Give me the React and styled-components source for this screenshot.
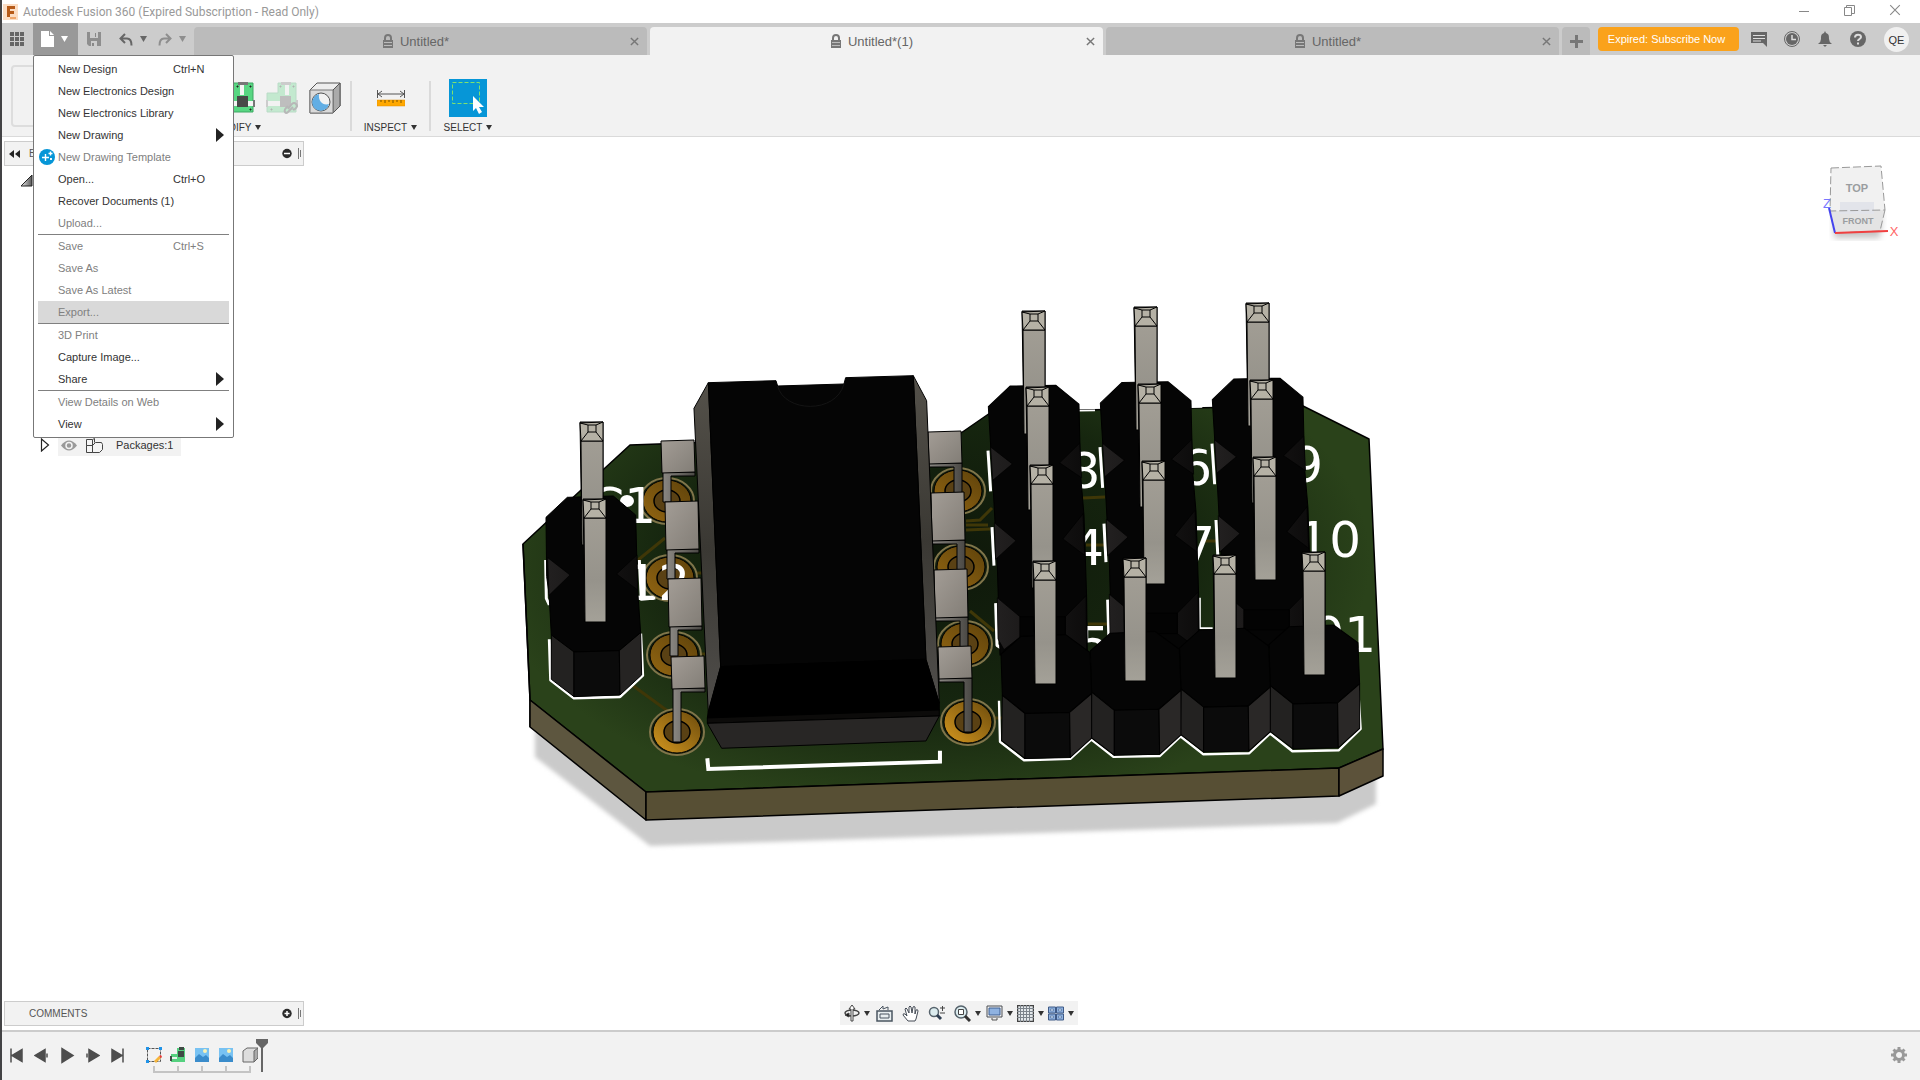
import styled, { createGlobalStyle, css } from "styled-components";

const cores = {
    barra: '#CCCCCC',
    painel: '#F2F2F2',
    aba: '#BBBBBB',
    texto: '#333333',
    apagado: '#808080',
    azul: '#0696D7',
    laranja: '#FAA21B'
};

const GlobalStyle = createGlobalStyle`
    * {
        box-sizing: border-box;
    }

    body {
        margin: 0;
        background-color: #FFFFFF;
        font-family: "Liberation Sans", Arial, sans-serif;
        font-size: 11px;
        color: ${cores.texto};
    }

    button {
        font: inherit;
        color: inherit;
        background: none;
        border: none;
        padding: 0;
        cursor: pointer;
    }

    svg {
        display: block;
        flex: none;
    }
`

const Window = styled.div`
    display: flex;
    flex-direction: column;
    min-height: 100vh;
    border-left: 2px solid #434345;
    overflow: hidden;
`

const TitleBar = styled.header`
    display: flex;
    align-items: center;
    height: 23px;
    padding: 0 14px 0 1px;
    gap: 5px;
    font-family: Roboto, "Noto Sans", sans-serif;
    font-size: 12px;
    line-height: 16px;
    color: #999999;
`

const Title = styled.span`
    flex: 1;
    white-space: nowrap;
`

const WindowButtons = styled.div`
    display: flex;
    gap: 34px;
    padding: 0 5px 3px 0;
`

const AppBar = styled.div`
    display: flex;
    align-items: flex-end;
    height: 32px;
    background-color: ${cores.barra};
`

const Tools = styled.div`
    display: flex;
    height: 100%;
    width: 192px;
    flex: none;
`

const ToolButton = styled.button`
    display: flex;
    align-items: center;
    justify-content: center;
    gap: 7px;
    height: 32px;
    width: ${({ $width }) => $width}px;
    padding-right: 2px;
    color: ${({ $dim }) => ($dim ? '#8E8E8E' : '#666666')};
`

const FileMenu = styled.div`
    position: relative;
    background-color: #999999;

    > button {
        color: #FFFFFF;
    }
`

const Menu = styled.div`
    position: absolute;
    z-index: 5;
    top: 32px;
    left: 0;
    width: 201px;
    padding: 2px 4px;
    background-color: #FFFFFF;
    border: 1px solid #777777;
    border-radius: 2px;
`

const MenuItem = styled.button`
    display: grid;
    grid-template-columns: 20px 115px 1fr 13px;
    align-items: center;
    width: 100%;
    height: 22px;
    text-align: left;
    white-space: nowrap;
    color: ${({ disabled }) => (disabled ? cores.apagado : cores.texto)};
    ${({ $active }) => $active && css`
        background-color: #D9D9D9;
    `}
`

const MenuLine = styled.hr`
    height: 1px;
    margin: 0;
    border: none;
    background-color: #808080;
`

const Tabs = styled.div`
    display: flex;
    flex: 1;
    gap: 3px;
    min-width: 0;
`

const Tab = styled.div`
    display: flex;
    align-items: center;
    flex: 1;
    height: 28px;
    padding: 0 8px;
    border-radius: 4px 4px 0 0;
    background-color: ${({ $active }) => ($active ? cores.painel : cores.aba)};
    color: #777777;
`

const TabName = styled.button`
    display: flex;
    align-items: center;
    justify-content: center;
    gap: 7px;
    flex: 1;
    font-size: 13px;
    color: #666666;
`

const NewTab = styled.button`
    display: flex;
    align-items: center;
    justify-content: center;
    width: 28px;
    height: 28px;
    margin-left: 3px;
    border-radius: 4px 4px 0 0;
    background-color: ${cores.aba};
    color: #777777;
`

const Subscribe = styled.button`
    width: 141px;
    height: 24px;
    margin: 0 4px 4px 8px;
    padding-right: 4px;
    border-radius: 4px;
    background-color: ${cores.laranja};
    color: #FFFFFF;
`

const Avatar = styled.button`
    width: 25px;
    height: 25px;
    margin: 0 11px 3px 9px;
    border-radius: 50%;
    background-color: #F0F0F0;
    font-size: 11px;
`

const Ribbon = styled.div`
    display: flex;
    height: 82px;
    padding: 10px 0 0 9px;
    background-color: ${cores.painel};
    border-bottom: 1px solid #DADADA;
`

const Workspace = styled.button`
    width: 100px;
    height: 62px;
    border: 2px solid #DDDDDD;
    border-radius: 4px;
`

const Group = styled.div`
    display: flex;
    flex-direction: column;
    width: ${({ $width }) => $width}px;
    padding-top: 11px;
    margin-left: ${({ $space }) => $space || 0}px;
`

const GroupIcons = styled.div`
    display: flex;
    align-items: center;
    justify-content: ${({ $end }) => ($end ? 'flex-end' : 'center')};
    gap: 11px;
    height: 44px;
`

const GroupLabel = styled.button`
    display: flex;
    align-items: center;
    justify-content: center;
    gap: 4px;
    height: 14px;
    font-size: 10px;
`

const GroupLine = styled.div`
    width: 2px;
    height: 50px;
    margin-top: 16px;
    background-color: #DADADA;
`

const Viewport = styled.main`
    position: relative;
    display: flex;
    flex-direction: column;
    justify-content: space-between;
    flex: 1;
`

/* the model sits under the panels */
const Scene = styled.svg`
    position: absolute;
    inset: 0;
    width: 100%;
    height: 100%;
`

const TopRow = styled.div`
    position: relative;
    display: flex;
    justify-content: space-between;
    padding: 4px 16px 0 2px;
`

const CubeCorner = styled.div`
    padding-top: 19px;
`

const BottomRow = styled.div`
    position: relative;
    display: grid;
    grid-template-columns: 1fr auto 1fr;
    padding: 0 6px 4px 2px;
`

const PanelBar = styled.div`
    display: flex;
    align-items: center;
    width: 300px;
    height: 25px;
    padding: 0 1px 0 4px;
    background-color: ${cores.painel};
    border: 1px solid ${cores.barra};
    font-size: 10px;
    color: #555555;

    > span {
        flex: 1;
        padding-left: ${({ $indent }) => $indent}px;
    }
`

const Tree = styled.ul`
    list-style: none;
    margin: 0;
    padding: 3px 0 0 16px;
`

const TreeRow = styled.li`
    display: flex;
    align-items: center;
    height: 22px;
    gap: 8px;
    margin-top: ${({ $space }) => $space || 0}px;
    padding-left: ${({ $level }) => $level * 18}px;
`

const TreeLabel = styled.button`
    display: flex;
    align-items: center;
    height: 22px;
    width: 123px;
    gap: 9px;
    padding-left: 3px;
    background-color: ${cores.painel};

    > span {
        padding-left: 4px;
    }
`

const NavBar = styled.nav`
    display: flex;
    align-items: center;
    height: 24px;
    padding: 0 4px;
    background-color: ${cores.painel};
`

const NavButton = styled.button`
    display: flex;
    align-items: center;
    gap: 4px;
    width: ${({ $width }) => $width}px;
`

const Timeline = styled.footer`
    display: flex;
    align-items: flex-start;
    height: 50px;
    padding: 15px 13px 0 2px;
    border-top: 2px solid ${cores.barra};
    background-color: ${cores.painel};
    color: #4D4D4D;
`

const PlayButton = styled.button`
    display: flex;
    justify-content: center;
    width: 25px;
`

const Features = styled.div`
    display: flex;
    flex: 1;
    margin-left: 13px;
`

const Feature = styled.button`
    display: flex;
    flex-direction: column;
    align-items: center;
    width: 24px;
`

const Marker = styled.svg`
    margin: -8px 0 0 -6px;
`

const Caret = ({ size = 6 }) => (
    <svg width={size} height={size - 1} viewBox="0 0 6 5"><path d="M0 0h6L3 5z" fill="currentColor" /></svg>
)

const Arrow = () => (
    <svg width="9" height="14" viewBox="0 0 9 14"><path d="M0 0l8 7-8 7z" fill="#222" /></svg>
)

const Lock = () => (
    <svg width="10" height="14" viewBox="0 0 10 14">
        <path d="M2 6V4a3 3 0 0 1 6 0v2" fill="none" stroke="#777" strokeWidth="2" />
        <path d="M0 6h10v8H0z" fill="#777" />
        <path d="M1 8.500h8M1 11.500h8" stroke="#BBB" />
    </svg>
)

const Cross = ({ size = 9, color = 'currentColor', width = 1.6 }) => (
    <svg width={size} height={size} viewBox="0 0 10 10">
        <path d="M1 1l8 8M9 1L1 9" stroke={color} strokeWidth={width} fill="none" />
    </svg>
)

const Undo = () => (
    <svg width="14" height="13" viewBox="0 0 14 13">
        <path d="M6 1L1.500 5.500 6 10M2 5.500h6c3 0 4.500 2 4.500 7" fill="none" stroke="currentColor" strokeWidth="2" />
    </svg>
)

const Redo = () => (
    <svg width="14" height="13" viewBox="0 0 14 13">
        <path d="M8 1l4.500 4.500L8 10M12 5.500H6c-3 0-4.500 2-4.500 7" fill="none" stroke="currentColor" strokeWidth="2" />
    </svg>
)

const Board = ({ dim }) => (
    <svg width="32" height="32" viewBox="0 0 32 32" opacity={dim ? 0.3 : 1}>
        <path d={dim ? 'M12 1h18v29H1V11h11z' : 'M2 1h28v29H2z'} fill="#58D682" stroke="#3CA862" />
        <path d={dim ? 'M19 1h4v12h-4zM1 19h13v5H1z' : 'M17 1h4v12h-4zM2 19h28v5H2z'} fill="#F4F4F4" />
        <path d="M15 0h10v3H15zM30 18h2v7h-2zM0 18h2v7H0z" fill="#777" />
        <path d="M14 14h11v11H14z" fill="#484848" />
        <path d="M14 4h1v1h-1zM27 4h1v1h-1zM27 27h1v1h-1zM5 27h1v1H5z" fill="#222" stroke="#222" />
        {dim && <path d="M22 27l4-5q2-2 4 0t0 4l-2 2M27 25l-5 5q-2 2-3 0t1-4l2-2" fill="none" stroke="#333" strokeWidth="2" />}
    </svg>
)

const BodyView = () => (
    <svg width="32" height="32" viewBox="0 0 32 32">
        <path d="M1 8l7-7h23v23l-7 7H1z" fill="#EDEDED" stroke="#555" />
        <path d="M24 8l7-7v23l-7 7z" fill="#AAA" stroke="#555" />
        <path d="M1 8h23v23H1z" fill="#DADADA" stroke="#777" />
        <circle cx="12" cy="20" r="9" fill="#F2F2F2" stroke="#555" />
        <path d="M10 12a8.500 8.500 0 1 0 10 10c-6 2-11-3-10-10z" fill="#62AEE4" />
    </svg>
)

const Ruler = () => (
    <svg width="28" height="18" viewBox="0 0 28 18">
        <path d="M.5 1v8M27.500 1v8M1 5h26M5 2L1 5l4 3M23 2l4 3-4 3" fill="none" stroke="#555" />
        <path d="M0 11h28v6H0z" fill="#FFA800" stroke="#E08C00" strokeWidth=".5" />
        <path d="M4 11v2M8 11v3M12 11v2M16 11v3M20 11v2M24 11v3" stroke="#7A5200" />
    </svg>
)

const SelectIcon = () => (
    <svg width="38" height="38" viewBox="0 0 38 38">
        <path d="M0 0h38v38H0z" fill={cores.azul} />
        <path d="M3.500 3.500h27v21h-27z" fill="none" stroke="#7FE26E" strokeDasharray="4 2" />
        <path d="M24 17v15l3-3 3 6 3-2-3-5h5z" fill="#FFF" />
    </svg>
)

const RoundSign = ({ plus }) => (
    <svg width="20" height="11" viewBox="0 0 20 11">
        <circle cx="5" cy="5.500" r="4.700" fill="#2A2A2A" />
        <path d={plus ? 'M2.500 5.500h5M5 3v5' : 'M2 5.500h6'} stroke="#FFF" strokeWidth="1.500" />
        <path d="M16.500 0v11M18.500 2v7" stroke="#777" />
    </svg>
)

const menuItems = [
    { name: 'New Design', keys: 'Ctrl+N' },
    { name: 'New Electronics Design' },
    { name: 'New Electronics Library' },
    { name: 'New Drawing', more: true },
    { name: 'New Drawing Template', off: true, plus: true },
    { name: 'Open...', keys: 'Ctrl+O' },
    { name: 'Recover Documents (1)' },
    { name: 'Upload...', off: true, line: true },
    { name: 'Save', keys: 'Ctrl+S', off: true },
    { name: 'Save As', off: true },
    { name: 'Save As Latest', off: true },
    { name: 'Export...', off: true, active: true, line: true },
    { name: '3D Print', off: true },
    { name: 'Capture Image...' },
    { name: 'Share', more: true, line: true },
    { name: 'View Details on Web', off: true },
    { name: 'View', more: true },
];

const MainMenu = () => (
    <Menu role="menu">
        {menuItems.map((item) => [
            <MenuItem key={item.name} role="menuitem" disabled={item.off} $active={item.active}>
                {item.plus ? (
                    <svg width="17" height="16" viewBox="-1 0 17 16">
                        <circle cx="8" cy="8" r="8" fill={cores.azul} />
                        <path d="M6.500 5v7M3 8.500h7M11.500 2.500v4M9.500 4.500h4M12 9v2M11 10h2" stroke="#FFF" strokeWidth="1.400" />
                    </svg>
                ) : <i />}
                <span>{item.name}</span>
                <span>{item.keys}</span>
                {item.more && <Arrow />}
            </MenuItem>,
            item.line && <MenuLine key={item.name + 'line'} />,
        ])}
    </Menu>
)

/* one square header pin, seen from above */
const Pin = ({ x, y }) => (
    <g transform={`translate(${x} ${y})`} stroke="#000" strokeLinejoin="round">
        <path d="M0 0h23v122H2z" fill="#55524C" />
        <path d="M1 19h22v104H2z" fill="url(#pin)" />
        <path d="M0 1l23-1v19H1z" fill="#B5B1A5" />
        <path d="M8 3h8v7H8zM0 1l8 2M23 0l-7 3M8 10l-7 9M16 10l7 9" fill="none" />
    </g>
)

const pins = [
    [580, 422], [583, 499],
    [1022, 311], [1134, 307], [1246, 303],
    [1026, 387], [1138, 384], [1250, 380],
    [1030, 465], [1142, 461], [1253, 457],
    [1033, 561], [1123, 558], [1213, 555], [1302, 552],
];

const pads = [
    [667, 501, 1], [670, 578, 1], [674, 655, 1], [677, 732],
    [958, 491, 1], [961, 567, 1], [965, 644, 1], [968, 722],
];

/* x, y, plate height, leg length */
const leftLeads = [[661, 440, 32, 26], [665, 501, 48, 26], [668, 578, 48, 26], [671, 656, 32, 50]];
const rightLeads = [[928, 431, 32, 26], [931, 492, 48, 26], [934, 569, 48, 26], [938, 646, 32, 50]];

const Lead = ({ x, y, h, leg, right }) => (
    <g transform={`translate(${x} ${y})`} stroke="#000">
        <path d={right ? `M1 ${h}h33v${leg + 4}h-8v-${leg}h-25z` : `M2 ${h}h32v4h-24v${leg}h-8z`} fill="url(#leg)" />
        <path d={`M0 1l33-1 1 ${h}-33 1z`} fill="url(#plate)" />
    </g>
)

const labels = [
    [1323, 482, '9'], [1361, 557, '10'], [1376, 652, '01'],
    [1100, 488, '8'], [1212, 485, '6'], [1104, 565, '4'], [1215, 562, '7'],
    [1110, 662, '5'], [656, 523, 'C1'], [690, 600, '12'],
];

const Column = ({ dx, dy }) => (
    <g transform={`translate(${dx} ${dy})`}>
        <path d="M144 478l8 114M156 692l6 108M167 905l4 118 30 18" stroke="#FFF" strokeWidth="9" fill="none" />
        <path d="M210 297l138-2 69 53 5 200 10 110 8 232 2 160-262 0-8-250-12-210-15-235z" fill="#050505" stroke="#000" strokeWidth="3" />
        <g fill="url(#notch)" stroke="#000" strokeWidth="2">
            <path d="M152 468l65 47-59 46zM419 457l-60 55 66 42z" />
            <path d="M163 680l65 50-61 52zM429 655l-60 70 65 46z" />
            <path d="M172 890l68 53v57l-48 35-18-30zM438 884l-62 59v57l64 45z" />
        </g>
        <path d="M240 943h136v57H240z" fill="#030303" stroke="#000" strokeWidth="2" />
    </g>
)

const FrontBlock = ({ n }) => (
    <g transform={`translate(${n * 268} ${n * -9})`} stroke="#000" strokeWidth="3">
        <path d="M243 998l134-5 73 50 5 115-66 53-134 3-68-51-4-115z" fill="#050505" />
        <path d="M187 1163l68 51v126l-70-50z" fill="#232221" />
        <path d="M255 1214l134-3 2 126-136 3z" fill="#0B0B0B" />
        <path d="M389 1211l66-53v125l-64 54z" fill="#2A2827" />
    </g>
)

const Pcb = () => (
    <Scene viewBox="2 137 1918 893" role="img" aria-label="Circuit board">
        <defs>
            <radialGradient id="mask" gradientUnits="userSpaceOnUse" cx="0" cy="0" r="1" gradientTransform="translate(930 560) scale(440 250)">
                <stop offset="0" stopColor="#0E170A" />
                <stop offset=".6" stopColor="#16260F" />
                <stop offset="1" stopColor="#2A421A" />
            </radialGradient>
            <linearGradient id="pin" x1="0" y1="0" x2="0" y2="1">
                <stop offset="0" stopColor="#A19D94" />
                <stop offset=".6" stopColor="#96938B" />
                <stop offset="1" stopColor="#A4A198" />
            </linearGradient>
            <linearGradient id="plate" x1="0" y1="0" x2="1" y2="1">
                <stop offset="0" stopColor="#A39D96" />
                <stop offset="1" stopColor="#827D76" />
            </linearGradient>
            <linearGradient id="leg">
                <stop offset="0" stopColor="#8A8782" />
                <stop offset="1" stopColor="#4A4844" />
            </linearGradient>
            <linearGradient id="chipSide" x1="0" y1="0" x2="0" y2="1">
                <stop offset="0" stopColor="#54514A" />
                <stop offset=".5" stopColor="#3A3833" />
                <stop offset="1" stopColor="#504E4B" />
            </linearGradient>
            <linearGradient id="gold" x1="1" y1="0" x2="0" y2="1">
                <stop offset="0" stopColor="#6A4A0C" />
                <stop offset="1" stopColor="#D4971F" />
            </linearGradient>
            <linearGradient id="goldDark" x1="1" y1="0" x2="0" y2="1">
                <stop offset="0" stopColor="#5E420B" />
                <stop offset="1" stopColor="#936612" />
            </linearGradient>
            <linearGradient id="notch">
                <stop offset="0" stopColor="#222020" />
                <stop offset="1" stopColor="#0D0C0C" />
            </linearGradient>
            <filter id="soft"><feGaussianBlur stdDeviation="2" /></filter>
        </defs>

        <path d="M535 730v27l115 89 687-23 39-19v-30z" fill="#CACACA" filter="url(#soft)" />
        <g stroke="#000" strokeWidth="1.500" strokeLinejoin="round">
            <path d="M523 544l57-53 50-46 331-12 29-20 90-3 223-4 66 33 14 310-44 19-693 24-116-92z" fill="url(#mask)" />
            <path d="M523 544l7 156v27" fill="none" />
            <path d="M530 700l116 92v28l-116-93z" fill="#5D563F" />
            <path d="M646 792l693-24v28l-693 24z" fill="#574F34" />
            <path d="M1339 768l44-19v27l-44 20z" fill="#5C523A" />
        </g>

        <g stroke="#3F3708" strokeWidth="3" fill="none">
            <path d="M638 560l27-22M632 685l37 27M693 573h20M697 654h10M966 521l14-1 12-12M966 530l24-1M1083 498l22-1M1086 545h20M970 611l24 20M1088 624h20M1204 541h13M990 718h12M966 525h22" />
        </g>

        {pads.map(([x, y, dark]) => (
            <g key={x + '-' + y}>
                <ellipse cx={x} cy={y} rx="27" ry="23" fill="#152210" stroke="#80754A" strokeWidth="2" />
                <ellipse cx={x} cy={y} rx="24" ry="21" fill={dark ? 'url(#goldDark)' : 'url(#gold)'} stroke="#000" />
                <ellipse cx={x} cy={y} rx="13" ry="11" fill="#5A4114" stroke="#000" strokeWidth="1.500" />
            </g>
        ))}

        <g fill="#FFF" fontFamily="DejaVu Sans, sans-serif" fontSize="50" textAnchor="end">
            {labels.map(([x, y, t]) => <text key={t} x={x} y={y}>{t}</text>)}
        </g>
        <ellipse cx="627" cy="501" rx="7" ry="6" fill="#FFF" />

        {leftLeads.map(([x, y, h, leg]) => <Lead key={y} x={x} y={y} h={h} leg={leg} />)}
        {rightLeads.map(([x, y, h, leg]) => <Lead key={y} x={x} y={y} h={h} leg={leg} right />)}

        <g transform="translate(500 360) scale(.3333)" stroke="#000" strokeWidth="3" strokeLinejoin="round">
            <path d="M582 145l43-77 37 852-37 140z" fill="url(#chipSide)" />
            <path d="M1240 47l40 75 38 908-40-132z" fill="url(#chipSide)" />
            <path d="M625 68l203-6 5 16 199-6 5-19 203-6 38 851-616 22z" fill="#050505" />
            <path d="M833 78c20 80 175 85 199-6" fill="none" stroke="#141414" />
            <path d="M662 920l616-22 40 132v20l-696 24 3-20z" fill="#000" />
            <path d="M622 1074l696-24v18l-696 22z" fill="#0C0B0A" />
            <path d="M622 1090l696-22-40 75-613 22z" fill="#282625" />
            <path d="M622 1195l3 32 695-22v-33" fill="none" stroke="#FFF" strokeWidth="12" strokeLinejoin="miter" />

            <path d="M137 600l2 115 9 20M148 838l4 122 70 54 138-4 68-64-6-125M418 600l6 118 42-4" fill="none" stroke="#FFF" strokeWidth="9" />
            <path d="M202 412l138-4 67 57 6 225 9 128-64 54-136 4-68-51-7-125-7-50-2-178z" fill="#050505" />
            <path d="M143 593l67 52-63 61zM411 585l-61 57 63 48z" fill="url(#notch)" strokeWidth="2" />
            <path d="M154 825l68 51v134l-68-52z" fill="#232221" />
            <path d="M222 876l136-4 2 133-138 5z" fill="#0B0B0B" />
            <path d="M358 872l64-54 3 127-65 60z" fill="#262423" />
        </g>

        {/* pin header, three columns and a front row */}
        <g transform="translate(940 280) scale(.3333 .3571)" strokeLinejoin="round">
            <path d="M417 366l48-1M752 356l35-1M780 890v85h38" stroke="#FFF" strokeWidth="5" fill="none" />
            <Column dx={0} dy={0} />
            <Column dx={336} dy={-10} />
            <Column dx={672} dy={-20} />
            <path d="M1255 1150l7 107-66 60-138 3-68-50-62 55-138 3-68-50-63 55-139 2-66-48-63 54-139 4-72-52-3-115" stroke="#FFF" strokeWidth="7" fill="none" />
            <FrontBlock n={3} />
            <FrontBlock n={2} />
            <FrontBlock n={1} />
            <FrontBlock n={0} />
        </g>

        {pins.map(([x, y]) => <Pin key={x + '-' + y} x={x} y={y} />)}
    </Scene>
)

const ViewCube = () => (
    <svg width="84" height="84" viewBox="1820 160 84 84" fontWeight="bold" textAnchor="middle">
        <defs><filter id="cubeBlur"><feGaussianBlur stdDeviation="3" /></filter></defs>
        <path d="M1834 214h48l-2 24h-46z" fill="#C4C4C4" filter="url(#cubeBlur)" />
        <path d="M1831 168l50-2 4 44-55 1z" fill="#F1F1F1" />
        <path d="M1830 211l55-1-5 21-45 2z" fill="#E4E4E4" />
        <path d="M1840 202h34v12h-34z" fill="#E2E4EA" />
        <path d="M1831 168l50-2 4 44-55 1zM1885 210l-5 21-45 2" fill="none" stroke="#999" strokeDasharray="8 3" />
        <text x="1857" y="192" fontSize="11" fill="#9A9DA0">TOP</text>
        <text x="1858" y="224" fontSize="9" fill="#9A9DA0">FRONT</text>
        <path d="M1829 208l6 25" stroke="#4444EE" strokeWidth="2" />
        <path d="M1835 233l53-2" stroke="#F04040" strokeWidth="2" />
        <g fontWeight="normal" fontSize="13">
            <text x="1827" y="208" fill="#7777FF">Z</text>
            <text x="1894" y="236" fill="#FF6666">X</text>
        </g>
    </svg>
)

const Nav = () => (
    <NavBar aria-label="Navigation">
        <NavButton $width={32} aria-label="Orbit">
            <svg width="16" height="18" viewBox="0 0 16 18" fill="none" stroke="#444">
                <ellipse cx="8" cy="9" rx="7" ry="3" strokeWidth="1.500" />
                <path d="M7 17V5H5l3-4 3 4H9v12z" fill="#FFF" /><path d="M1 11l4-2v4z" fill="#111" />
            </svg>
            <Caret />
        </NavButton>
        <NavButton $width={26} aria-label="Look at">
            <svg width="17" height="17" viewBox="0 0 17 17" fill="#E8EEF0" stroke="#4A5560">
                <path d="M1 6h15v10H1z" strokeWidth="1.500" /><path d="M4 9h9v4H4z" /><path d="M3 5l4-4v3l5-2v3" fill="none" />
            </svg>
        </NavButton>
        <NavButton $width={26} aria-label="Pan">
            <svg width="17" height="17" viewBox="0 0 17 17">
                <path d="M6 16l-5-6q0-2 2-1l2 2-2-7q1-2 2 0l2 4V2q1-2 2 0l1 6 1-6q1-1 2 0v7l1-4q2-1 2 1l-2 8-1 2z" fill="#FFF" stroke="#444B55" />
            </svg>
        </NavButton>
        <NavButton $width={26} aria-label="Zoom">
            <svg width="17" height="17" viewBox="0 0 17 17">
                <circle cx="6" cy="7" r="4.500" fill="#DCECEF" stroke="#56636C" strokeWidth="1.500" />
                <path d="M9 10l4 4" stroke="#2F3F52" strokeWidth="3" /><path d="M12 3h5M14.500 1v5M12 8h5" stroke="#444" />
            </svg>
        </NavButton>
        <NavButton $width={32} aria-label="Fit">
            <svg width="17" height="17" viewBox="0 0 17 17">
                <circle cx="7" cy="7" r="6" fill="#DCECEF" stroke="#56636C" strokeWidth="1.500" />
                <path d="M4.500 4.500h5v5h-5z" fill="#FFF" stroke="#444" /><path d="M11 11l5 5" stroke="#333" strokeWidth="3" />
            </svg>
            <Caret />
        </NavButton>
        <NavButton $width={31} aria-label="Display settings">
            <svg width="17" height="17" viewBox="0 0 17 17">
                <path d="M1 1h15v11H1z" fill="#EEE" stroke="#4A4F55" /><path d="M3 3h11v7H3z" fill="#8FB2E0" stroke="#3C5E92" />
                <path d="M6 13v2h5v-2" fill="#EEE" stroke="#555" />
            </svg>
            <Caret />
        </NavButton>
        <NavButton $width={31} aria-label="Grid and snaps">
            <svg width="17" height="17" viewBox="0 0 17 17">
                <path d="M.5.500h16v16H.5z" fill="#E4E9EC" stroke="#444" strokeWidth="1.500" />
                <path d="M3.500 0v17M6.500 0v17M9.500 0v17M12.500 0v17M0 3.500h17M0 6.500h17M0 9.500h17M0 12.500h17" stroke="#7C848C" />
            </svg>
            <Caret />
        </NavButton>
        <NavButton $width={26} aria-label="Viewports">
            <svg width="16" height="15" viewBox="0 0 16 15" fill="#8FB2E0" stroke="#3F5A86">
                <path d="M.5 1h7v6h-7zM8.500 1h7v6h-7zM.5 8h7v6h-7zM8.500 8h7v6h-7z" />
                <path d="M2.500 3h3v2h-3zM10.500 3h3v2h-3zM2.500 10h3v2h-3zM10.500 10h3v2h-3z" fill="#C6DAF2" strokeWidth=".5" />
            </svg>
            <Caret />
        </NavButton>
    </NavBar>
)

const plays = [
    ['First', 'M2 1v14M13 2v12L3 8z'],
    ['Back', 'M11 2v12L1 8zM13 6v4'],
    ['Play', 'M3 1v14l11-7z'],
    ['Forward', 'M5 2v12l10-6zM3 6v4'],
    ['Last', 'M3 2v12l10-6zM14 1v14'],
];

const Picture = () => (
    <g>
        <path d="M1 1h14v14H1z" fill="#78C2F2" />
        <path d="M1 11l4-4 4 3 3-2 3 3v4H1z" fill="#3A8CCB" />
        <circle cx="11" cy="4" r="2" fill="#FBF3B5" />
    </g>
)

const features = [
    <g key="sketch">
        <path d="M1.500 1.500h13v13h-13z" fill="none" stroke="#555" strokeDasharray="3 1" />
        <path d="M0 0h3v3H0zM13 0h3v3h-3zM0 13h3v3H0z" fill="#1F93E8" />
        <path d="M8 14l5-5 2 2-5 5z" fill="#F6B53A" /><path d="M13 9l2-1 1 2-1 1z" fill="#E33" />
    </g>,
    <g key="pcb">
        <path d="M7 1h8v14H1V7h6z" fill="#55D17F" />
        <path d="M9 0h5v3H9zM8 4h6v6H8zM0 9h2v5H0z" fill="#3E4A44" />
        <path d="M2 10h5v2H2z" fill="#E8F5EC" />
    </g>,
    <Picture key="a" />,
    <Picture key="b" />,
    <g key="box" fill="#DDD" stroke="#666">
        <path d="M1 4l4-3h11v10l-4 4H1z" /><path d="M12 4l4-3v10l-4 4z" fill="#AAA" />
    </g>,
];

const TabItem = ({ name, active }) => (
    <Tab $active={active}>
        <TabName role="tab" aria-selected={!!active}><Lock />{name}</TabName>
        <button aria-label="Close tab"><Cross /></button>
    </Tab>
)

const App = () => (
    <Window>
        <GlobalStyle />
        <TitleBar>
            <svg width="15" height="16" viewBox="0 0 15 16">
                <path d="M0 0h15v16H0z" fill="#FBDDC4" />
                <path d="M4 2h8v3H7v2h4v3H7v3H4z" fill="#B65A18" /><path d="M7 13h6v2H7z" fill="#F0A76C" />
            </svg>
            <Title>Autodesk Fusion 360 (Expired Subscription - Read Only)</Title>
            <WindowButtons>
                <button aria-label="Minimize"><svg width="11" height="11"><path d="M0 6.500h10" stroke="#888" /></svg></button>
                <button aria-label="Restore">
                    <svg width="11" height="11" fill="none" stroke="#888"><path d="M.5 2.500h7v8h-7zM2.500 2V.5h8v8H8" /></svg>
                </button>
                <button aria-label="Close"><Cross size={12} color="#888" width={0.9} /></button>
            </WindowButtons>
        </TitleBar>

        <AppBar>
            <Tools>
                <ToolButton $width={31} aria-label="Data panel">
                    <svg width="14" height="14" fill="currentColor">
                        <path d="M0 0h4v4H0zM5 0h4v4H5zM10 0h4v4h-4zM0 5h4v4H0zM5 5h4v4H5zM10 5h4v4h-4zM0 10h4v4H0zM5 10h4v4H5zM10 10h4v4h-4z" />
                    </svg>
                </ToolButton>
                <FileMenu>
                    <ToolButton $width={45} aria-label="File" aria-expanded="true">
                        <svg width="13" height="16" fill="currentColor"><path d="M0 0h8v5h5v11H0zM9 0l4 4H9z" /></svg>
                        <Caret size={7} />
                    </ToolButton>
                    <MainMenu />
                </FileMenu>
                <ToolButton $width={34} $dim aria-label="Save">
                    <svg width="14" height="14"><path d="M0 0h14v14H2l-2-2z" fill="currentColor" /><path d="M3 0h8v6H3zM4 9h6v5H4z" fill="#CCC" /><path d="M8 1h1v4H8zM5 11h2v3H5z" fill="#888" /></svg>
                </ToolButton>
                <ToolButton $width={43} aria-label="Undo"><Undo /><Caret size={7} /></ToolButton>
                <ToolButton $width={36} $dim aria-label="Redo"><Redo /><Caret size={7} /></ToolButton>
            </Tools>
            <Tabs role="tablist">
                <TabItem name="Untitled*" />
                <TabItem name="Untitled*(1)" active />
                <TabItem name="Untitled*" />
            </Tabs>
            <NewTab aria-label="New tab">
                <svg width="13" height="13"><path d="M6.500 0v13M0 6.500h13" stroke="currentColor" strokeWidth="3" /></svg>
            </NewTab>
            <Subscribe>Expired: Subscribe Now</Subscribe>
            <ToolButton $width={33} aria-label="Comments">
                <svg width="16" height="16"><path d="M0 1h16v15l-4-4H0z" fill="currentColor" /><path d="M2 4.500h12M2 7.500h12M2 10h8" stroke="#DDD" /></svg>
            </ToolButton>
            <ToolButton $width={33} aria-label="Job status">
                <svg width="16" height="16"><circle cx="8" cy="8" r="7.500" fill="none" stroke="currentColor" /><circle cx="8" cy="8" r="6" fill="currentColor" /><path d="M8 4v4.500h4" fill="none" stroke="#DDD" strokeWidth="1.500" /></svg>
            </ToolButton>
            <ToolButton $width={33} aria-label="Notifications">
                <svg width="14" height="16" fill="currentColor"><path d="M7 0l1 2c3 1 3 3 3 6q0 3 3 5H0q3-2 3-5c0-3 0-5 3-6zM5 14h4l-2 2z" /></svg>
            </ToolButton>
            <ToolButton $width={33} aria-label="Help">
                <svg width="16" height="16"><circle cx="8" cy="8" r="8" fill="currentColor" /><path d="M5 6.500c0-4 6-3.500 6-.5 0 2-3 2-3 4M8 11.500v2" fill="none" stroke="#DDD" strokeWidth="2" /></svg>
            </ToolButton>
            <Avatar aria-label="Account">QE</Avatar>
        </AppBar>

        <Ribbon>
            <Workspace aria-label="Workspace" />
            <Group $width={208} $space={22}>
                <GroupIcons $end><Board /><Board dim /><BodyView /></GroupIcons>
                <GroupLabel>MODIFY <Caret /></GroupLabel>
            </Group>
            <Group $width={9} />
            <GroupLine />
            <Group $width={77}>
                <GroupIcons><Ruler /></GroupIcons>
                <GroupLabel>INSPECT <Caret /></GroupLabel>
            </Group>
            <GroupLine />
            <Group $width={74}>
                <GroupIcons><SelectIcon /></GroupIcons>
                <GroupLabel>SELECT <Caret /></GroupLabel>
            </Group>
        </Ribbon>

        <Viewport>
            <Pcb />
            <TopRow>
                <div>
                    <PanelBar $indent={9}>
                        <svg width="11" height="8"><path d="M5 0v8L0 4zM11 0v8L6 4z" fill="#222" /></svg>
                        <span>BROWSER</span>
                        <RoundSign />
                    </PanelBar>
                    <Tree>
                        <TreeRow $level={0}>
                            <svg width="13" height="13">
                                <defs><linearGradient id="tri"><stop offset="0" stopColor="#EEE" /><stop offset="1" stopColor="#555" /></linearGradient></defs>
                                <path d="M12 1v11H1z" fill="url(#tri)" stroke="#222" />
                            </svg>
                        </TreeRow>
                        <TreeRow $level={1} $space={243}>
                            <svg width="12" height="14"><path d="M3.500 1v12l7-6z" fill="#FFF" stroke="#222" strokeWidth="1.200" /></svg>
                            <TreeLabel>
                                <svg width="16" height="11"><path d="M0 5.500q8-10 16 0-8 10-16 0z" fill="#999" /><circle cx="8" cy="5.500" r="3" fill="none" stroke="#F2F2F2" strokeWidth="1.500" /></svg>
                                <svg width="17" height="15" fill="#F5F5F5" stroke="#444"><path d="M.5 1.500h6v6h-6zM.5 7.500h6v7h-6zM6.500 7.500l3-3h6l1 2v5l-3 3h-7z" /><path d="M6.500 1.500l2-1v4" /></svg>
                                <span>Packages:1</span>
                            </TreeLabel>
                        </TreeRow>
                    </Tree>
                </div>
                <CubeCorner>
                    <ViewCube />
                </CubeCorner>
            </TopRow>
            <BottomRow>
                <PanelBar $indent={20}>
                    <span>COMMENTS</span>
                    <RoundSign plus />
                </PanelBar>
                <Nav />
            </BottomRow>
        </Viewport>

        <Timeline>
            {plays.map(([name, d]) => (
                <PlayButton key={name} aria-label={name}>
                    <svg width="16" height="17" viewBox="0 0 16 16"><path d={d} fill="currentColor" stroke="currentColor" strokeWidth="1.500" /></svg>
                </PlayButton>
            ))}
            <Features>
                {features.map((icon, i) => (
                    <Feature key={icon.key} aria-label={`Feature ${i + 1}`}>
                        <svg width="16" height="16" viewBox="0 0 16 16">{icon}</svg>
                        <svg width="24" height="10" viewBox="0 0 24 10">
                            <path
                                d={i === 0 ? 'M12 3v6h12' : i === 4 ? 'M0 9h12V3' : 'M0 9h24M12 3v6'}
                                fill="none" stroke="#C4C4C4" strokeWidth="2"
                            />
                        </svg>
                    </Feature>
                ))}
                <Marker width="12" height="33"><path d="M0 0h12v4L7 9v24H5V9L0 4z" fill="#666" /></Marker>
            </Features>
            <button aria-label="Preferences">
                <svg width="16" height="16" viewBox="0 0 16 16">
                    <path d="M8 0v16M0 8h16M2.500 2.500l11 11M13.500 2.500l-11 11" stroke="#999" strokeWidth="3" />
                    <circle cx="8" cy="8" r="4.500" fill={cores.painel} stroke="#999" strokeWidth="3" />
                </svg>
            </button>
        </Timeline>
    </Window>
)

export default App;
